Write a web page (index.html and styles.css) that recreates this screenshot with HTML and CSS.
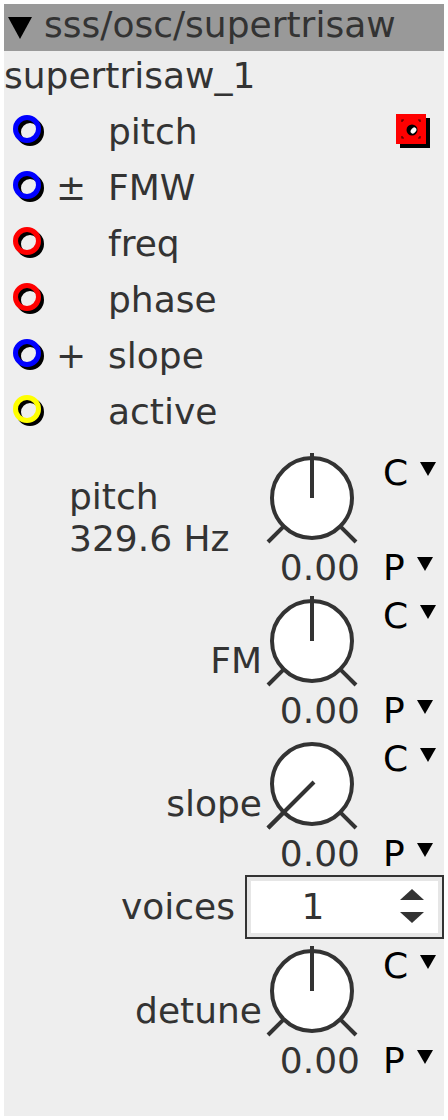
FILE: index.html
```html
<!DOCTYPE html>
<html>
<head>
<meta charset="utf-8">
<link rel="stylesheet" href="styles.css">
</head>
<body>
<div class="panel">
  <div class="title">
    <svg class="title-tri" width="24" height="22" viewBox="0 0 24 22"><polygon points="0,0 24,0 12,22" fill="#000"/></svg>
    <span class="title-text">sss/osc/supertrisaw</span>
  </div>
  <div class="name">supertrisaw_1</div>

  <div class="ports">
    <div class="port">
      <svg class="jack" width="34" height="34" viewBox="0 0 34 34"><circle cx="17" cy="17" r="11.5" fill="none" stroke="#000" stroke-width="5"/><circle cx="14" cy="14" r="11.5" fill="none" stroke="#0000ff" stroke-width="5"/></svg>
      <span class="mod"></span>
      <span class="plabel">pitch</span>
      <svg class="cv" width="36" height="36" viewBox="0 0 36 36">
        <rect x="4" y="4" width="30" height="30" fill="#000"/>
        <rect x="0" y="0" width="30" height="30" fill="#ff0000"/>
        <path d="M6 8V6H8 M22 6H24V8 M24 22V24H22 M8 24H6V22" fill="none" stroke="#400" stroke-width="1.2"/>
        <circle cx="16" cy="16" r="5.5" fill="#000"/>
        <ellipse cx="17.5" cy="16.5" rx="2.4" ry="3.4" transform="rotate(40 17.5 16.5)" fill="#fff"/>
      </svg>
    </div>
    <div class="port">
      <svg class="jack" width="34" height="34" viewBox="0 0 34 34"><circle cx="17" cy="17" r="11.5" fill="none" stroke="#000" stroke-width="5"/><circle cx="14" cy="14" r="11.5" fill="none" stroke="#0000ff" stroke-width="5"/></svg>
      <span class="mod">±</span>
      <span class="plabel">FMW</span>
    </div>
    <div class="port">
      <svg class="jack" width="34" height="34" viewBox="0 0 34 34"><circle cx="17" cy="17" r="11.5" fill="none" stroke="#000" stroke-width="5"/><circle cx="14" cy="14" r="11.5" fill="none" stroke="#ff0000" stroke-width="5"/></svg>
      <span class="mod"></span>
      <span class="plabel">freq</span>
    </div>
    <div class="port">
      <svg class="jack" width="34" height="34" viewBox="0 0 34 34"><circle cx="17" cy="17" r="11.5" fill="none" stroke="#000" stroke-width="5"/><circle cx="14" cy="14" r="11.5" fill="none" stroke="#ff0000" stroke-width="5"/></svg>
      <span class="mod"></span>
      <span class="plabel">phase</span>
    </div>
    <div class="port">
      <svg class="jack" width="34" height="34" viewBox="0 0 34 34"><circle cx="17" cy="17" r="11.5" fill="none" stroke="#000" stroke-width="5"/><circle cx="14" cy="14" r="11.5" fill="none" stroke="#0000ff" stroke-width="5"/></svg>
      <span class="mod">+</span>
      <span class="plabel">slope</span>
    </div>
    <div class="port">
      <svg class="jack" width="34" height="34" viewBox="0 0 34 34"><circle cx="17" cy="17" r="11.5" fill="none" stroke="#000" stroke-width="5"/><circle cx="14" cy="14" r="11.5" fill="none" stroke="#ffff00" stroke-width="5"/></svg>
      <span class="mod"></span>
      <span class="plabel">active</span>
    </div>
  </div>

  <div class="kblock first">
    <div class="klabel left">pitch<br>329.6 Hz</div>
    <div class="kcol">
      <svg class="knob" width="92" height="92" viewBox="0 0 92 92"><line x1="17.7" y1="74.3" x2="2" y2="90" stroke="#333" stroke-width="4"/><line x1="74.3" y1="74.3" x2="90" y2="90" stroke="#333" stroke-width="4"/><circle cx="46" cy="46" r="40" fill="#fff" stroke="#333" stroke-width="4"/><line x1="46" y1="46" x2="46" y2="1" stroke="#333" stroke-width="4"/></svg>
      <div class="val">0.00</div>
    </div>
    <div class="cp">
      <div class="cpitem">C<svg class="dd" width="16" height="14" viewBox="0 0 16 14"><polygon points="0,0 16,0 8,14" fill="#000"/></svg></div>
      <div class="cpitem">P<svg class="dd" width="16" height="14" viewBox="0 0 16 14"><polygon points="0,0 16,0 8,14" fill="#000"/></svg></div>
    </div>
  </div>

  <div class="kblock">
    <div class="klabel">FM</div>
    <div class="kcol">
      <svg class="knob" width="92" height="92" viewBox="0 0 92 92"><line x1="17.7" y1="74.3" x2="2" y2="90" stroke="#333" stroke-width="4"/><line x1="74.3" y1="74.3" x2="90" y2="90" stroke="#333" stroke-width="4"/><circle cx="46" cy="46" r="40" fill="#fff" stroke="#333" stroke-width="4"/><line x1="46" y1="46" x2="46" y2="1" stroke="#333" stroke-width="4"/></svg>
      <div class="val">0.00</div>
    </div>
    <div class="cp">
      <div class="cpitem">C<svg class="dd" width="16" height="14" viewBox="0 0 16 14"><polygon points="0,0 16,0 8,14" fill="#000"/></svg></div>
      <div class="cpitem">P<svg class="dd" width="16" height="14" viewBox="0 0 16 14"><polygon points="0,0 16,0 8,14" fill="#000"/></svg></div>
    </div>
  </div>

  <div class="kblock">
    <div class="klabel">slope</div>
    <div class="kcol">
      <svg class="knob" width="92" height="92" viewBox="0 0 92 92"><line x1="17.7" y1="74.3" x2="2" y2="90" stroke="#333" stroke-width="4"/><line x1="74.3" y1="74.3" x2="90" y2="90" stroke="#333" stroke-width="4"/><circle cx="46" cy="46" r="40" fill="#fff" stroke="#333" stroke-width="4"/><line x1="48" y1="44" x2="2" y2="90" stroke="#333" stroke-width="4"/></svg>
      <div class="val">0.00</div>
    </div>
    <div class="cp">
      <div class="cpitem">C<svg class="dd" width="16" height="14" viewBox="0 0 16 14"><polygon points="0,0 16,0 8,14" fill="#000"/></svg></div>
      <div class="cpitem">P<svg class="dd" width="16" height="14" viewBox="0 0 16 14"><polygon points="0,0 16,0 8,14" fill="#000"/></svg></div>
    </div>
  </div>

  <div class="vrow">
    <div class="vlabel">voices</div>
    <div class="spin">
      <span class="spinval">1</span>
      <svg class="arrows" width="26" height="36" viewBox="0 0 26 36"><polygon points="1,11 25,11 13,0" fill="#333"/><polygon points="1,23 25,23 13,34" fill="#333"/></svg>
    </div>
  </div>

  <div class="kblock">
    <div class="klabel">detune</div>
    <div class="kcol">
      <svg class="knob" width="92" height="92" viewBox="0 0 92 92"><line x1="17.7" y1="74.3" x2="2" y2="90" stroke="#333" stroke-width="4"/><line x1="74.3" y1="74.3" x2="90" y2="90" stroke="#333" stroke-width="4"/><circle cx="46" cy="46" r="40" fill="#fff" stroke="#333" stroke-width="4"/><line x1="46" y1="46" x2="46" y2="1" stroke="#333" stroke-width="4"/></svg>
      <div class="val">0.00</div>
    </div>
    <div class="cp">
      <div class="cpitem">C<svg class="dd" width="16" height="14" viewBox="0 0 16 14"><polygon points="0,0 16,0 8,14" fill="#000"/></svg></div>
      <div class="cpitem">P<svg class="dd" width="16" height="14" viewBox="0 0 16 14"><polygon points="0,0 16,0 8,14" fill="#000"/></svg></div>
    </div>
  </div>
</div>
</body>
</html>
```

FILE: styles.css
```css
html, body {
  margin: 0;
  padding: 0;
  background: #fff;
}
body {
  font-family: "DejaVu Sans", sans-serif;
  font-size: 36px;
  line-height: 42px;
  color: #333;
}
.panel {
  margin: 4px;
  width: 440px;
  height: 1112px;
  background: #eee;
  overflow: hidden;
}
.title {
  height: 47px;
  background: #999;
  display: flex;
  align-items: flex-start;
}
.title-tri {
  display: block;
  margin: 13px 0 0 4px;
  flex: none;
}
.title-text {
  margin-left: 12px;
  line-height: 42px;
}
.name {
  margin-top: 4px;
  height: 42px;
}
.ports {
  margin-top: 7px;
}
.port {
  height: 56px;
  display: flex;
  align-items: center;
}
.jack {
  display: block;
  margin-left: 9px;
  flex: none;
}
.mod {
  width: 61px;
  padding-left: 9px;
  box-sizing: border-box;
  flex: none;
}
.plabel {
  flex: 1;
}
.cv {
  display: block;
  margin-right: 12px;
  flex: none;
}
.kblock {
  display: grid;
  grid-template-columns: 258px 98px 1fr;
}
.kblock.first {
  margin-top: 12px;
}
.kblock + .kblock {
  margin-top: 6px;
}
.klabel {
  align-self: center;
  text-align: right;
  padding-bottom: 6px;
}
.klabel.left {
  text-align: left;
  padding-left: 65px;
}
.kcol {
  display: flex;
  flex-direction: column;
  align-items: flex-end;
}
.knob {
  display: block;
  align-self: flex-start;
  margin-left: 4px;
}
.val {
  margin-top: 3px;
}
.cp {
  display: flex;
  flex-direction: column;
  justify-content: space-between;
  padding-left: 23px;
  color: #000;
}
.cpitem {
  display: flex;
  align-items: flex-start;
}
.dd {
  display: block;
  margin: 10px 0 0 12px;
}
.vrow {
  display: flex;
  align-items: center;
  height: 64px;
  margin-bottom: 6px;
}
.vlabel {
  width: 231px;
  text-align: right;
  margin-right: 10px;
}
.spin {
  width: 199px;
  height: 64px;
  box-sizing: border-box;
  border: 2px solid #333;
  background: #fff;
  box-shadow: inset 0 0 0 4px #e6e6e6;
  display: flex;
  align-items: center;
}
.spinval {
  width: 132px;
  text-align: center;
}
.arrows {
  display: block;
  margin-left: 20px;
}
```
